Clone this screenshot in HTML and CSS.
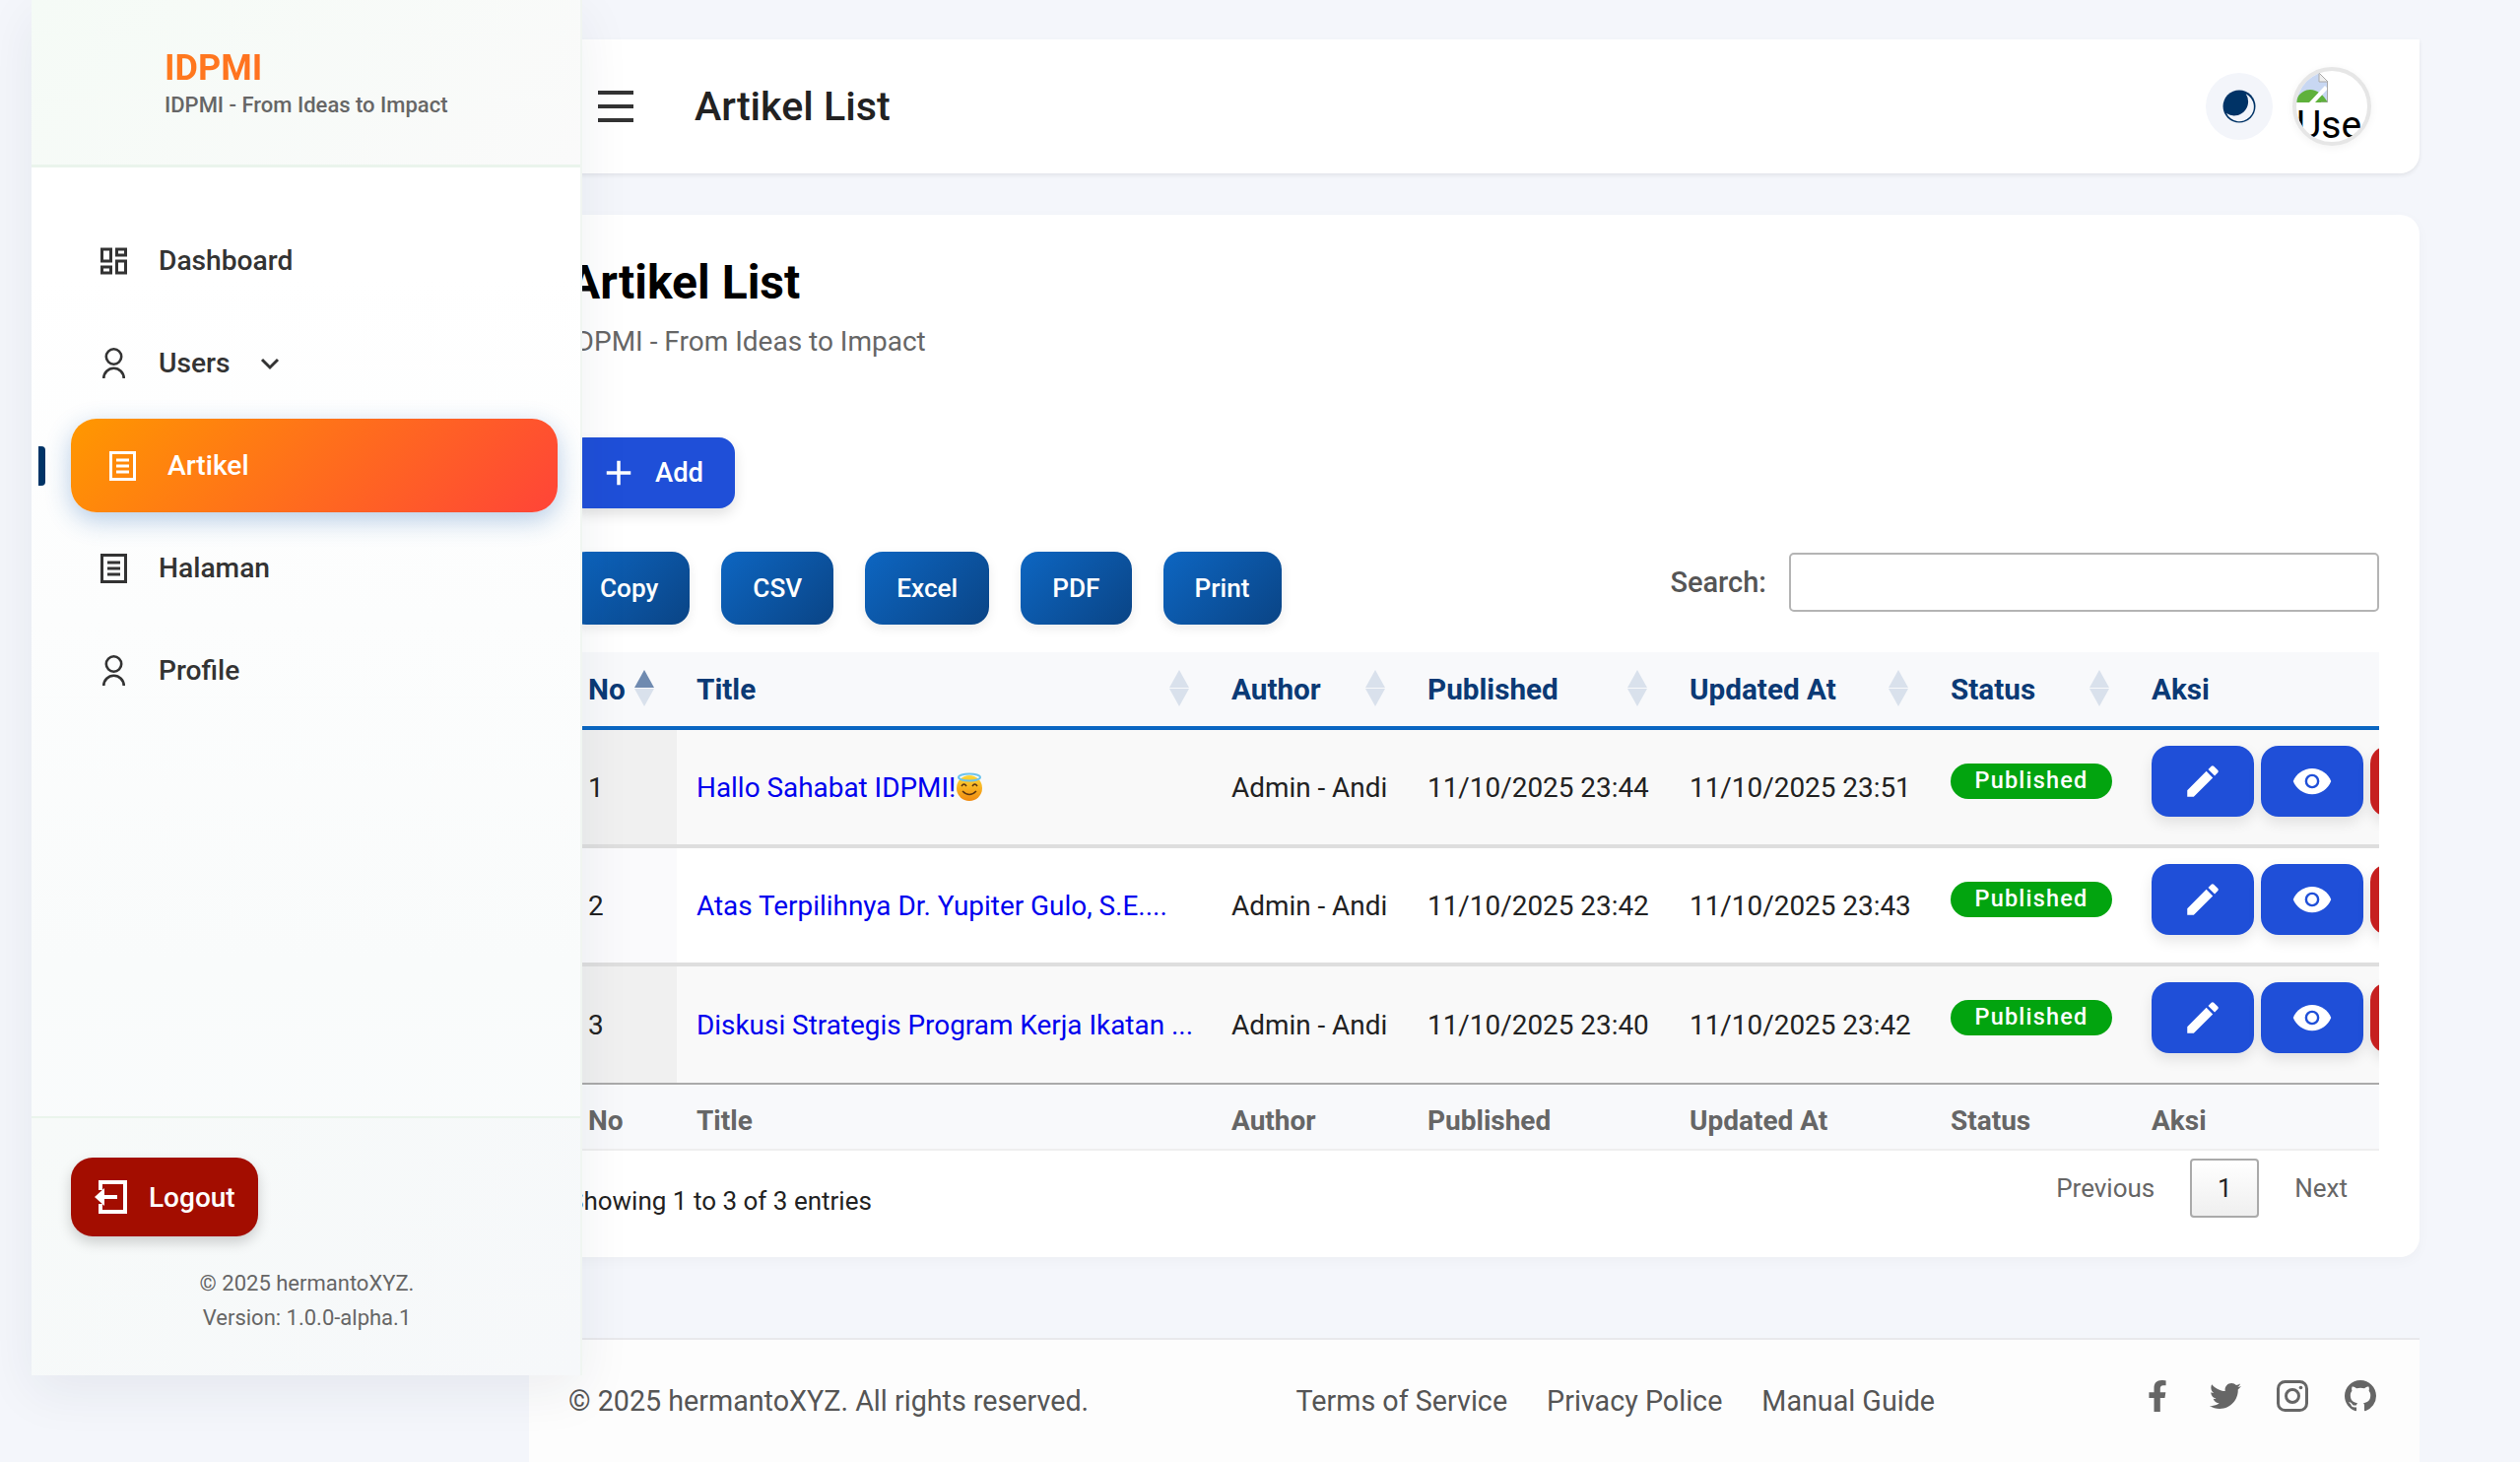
FILE: index.html
```html
<!DOCTYPE html>
<html lang="en">
<head>
	<meta charset="UTF-8">
	<title>Artikel List</title>
	<meta name="viewport" content="width=device-width, initial-scale=1.0">
	<link rel="stylesheet" href="styles.css">
</head>
<body>
	<aside class="sidebar">
		<div class="brand">
			<div class="brand-name">IDPMI</div>
			<div class="brand-tag">IDPMI - From Ideas to Impact</div>
		</div>
		<nav class="nav">
			<a class="nav-item">
				<svg class="nav-icon" viewBox="3 3 18 18"><path d="M19 5v2h-4V5h4M9 5v6H5V5h4m10 8v6h-4v-6h4M9 17v2H5v-2h4M21 3h-8v6h8V3zM11 3H3v10h8V3zm10 8h-8v10h8V11zm-10 4H3v6h8v-6z"/></svg>
				Dashboard
			</a>
			<a class="nav-item">
				<svg class="nav-icon person" viewBox="0 0 27 32"><circle cx="13.500" cy="9" r="7.700"/><path d="M3.300 31A10.200 10.200 0 0 1 23.700 31"/></svg>
				Users
				<svg class="chevron" viewBox="0 0 20 14"><path d="M2 3l8 8 8-8"/></svg>
			</a>
			<span class="nav-marker"></span>
			<a class="nav-item active">
				<svg class="nav-icon doc" viewBox="0 0 27 30"><rect x="1.500" y="1.500" width="24" height="27"/><path d="M7 9h13M7 15h13M7 21h13"/></svg>
				Artikel
			</a>
			<a class="nav-item">
				<svg class="nav-icon doc" viewBox="0 0 27 30"><rect x="1.500" y="1.500" width="24" height="27"/><path d="M7 9h13M7 15h13M7 21h13"/></svg>
				Halaman
			</a>
			<a class="nav-item">
				<svg class="nav-icon person" viewBox="0 0 27 32"><circle cx="13.500" cy="9" r="7.700"/><path d="M3.300 31A10.200 10.200 0 0 1 23.700 31"/></svg>
				Profile
			</a>
		</nav>
		<div class="side-foot">
			<button class="logout">
				<svg viewBox="0 0 33 34"><path class="frame" d="M6 10V2h25v30H6v-8"/><path class="arrow" d="M8 17h15"/><path class="head" d="M0 17l10-9v18z"/></svg>
				Logout
			</button>
			<p class="side-copy">© 2025 hermantoXYZ.</p>
			<p class="side-copy">Version: 1.0.0-alpha.1</p>
		</div>
	</aside>

	<div class="main">
		<header class="topbar">
			<button class="burger"><span></span><span></span><span></span></button>
			<div class="topbar-title">Artikel List</div>
			<button class="theme-btn">
				<svg viewBox="0 0 34 34"><circle cx="17" cy="17" r="16.500" fill="#003366"/><path fill="#f3f5fa" d="M23.700 4.300A14.700 14.700 0 1 1 4 24A14.200 14.200 0 0 0 23.700 4.300z"/></svg>
			</button>
			<div class="avatar">
				<svg class="broken" viewBox="0 0 32 30">
					<path fill="#c8d7f2" d="M0 0h23l9 9v21H0z"/>
					<path fill="#5fb13c" d="M0 30v-4c4-6 9-9 14-9 7 0 13 5 18 13z"/>
					<path fill="#fff" d="M0 6c5 0 9-2 12-6H0zM13 30l16-17 3 3-13 14z"/>
					<path fill="#eee" stroke="#aaa" d="M23 0l9 9h-9z"/>
					<path fill="none" stroke="#aaa" d="M31.500 9v21H25"/>
				</svg>
				<span class="avatar-alt">User</span>
			</div>
		</header>

		<section class="card">
			<h1 class="card-title">Artikel List</h1>
			<p class="card-sub">IDPMI - From Ideas to Impact</p>
			<button class="add-btn">
				<svg viewBox="0 0 24 24"><path d="M19 13h-6v6h-2v-6H5v-2h6V5h2v6h6v2z"/></svg>
				Add
			</button>

			<div class="toolbar">
				<div class="export">
					<button class="export-btn">Copy</button>
					<button class="export-btn">CSV</button>
					<button class="export-btn">Excel</button>
					<button class="export-btn">PDF</button>
					<button class="export-btn">Print</button>
				</div>
				<label class="search">Search: <input type="text"></label>
			</div>

			<div class="table-wrap">
				<table class="data-table">
					<colgroup>
						<col class="col-no"><col class="col-title"><col class="col-author"><col class="col-pub"><col class="col-upd"><col class="col-status"><col class="col-aksi">
					</colgroup>
					<thead>
						<tr>
							<th>No<span class="sort sorted"></span></th>
							<th>Title<span class="sort"></span></th>
							<th>Author<span class="sort"></span></th>
							<th>Published<span class="sort"></span></th>
							<th>Updated At<span class="sort"></span></th>
							<th>Status<span class="sort"></span></th>
							<th>Aksi</th>
						</tr>
					</thead>
					<tbody>
						<tr class="odd">
							<td class="first">1</td>
							<td><a class="link">Hallo Sahabat IDPMI!<svg class="emoji" viewBox="0 0 28 30"><defs><linearGradient id="face" x1="0" y1="0" x2="0" y2="1"><stop offset="0" stop-color="#fdd835"/><stop offset="1" stop-color="#f08a10"/></linearGradient></defs><circle cx="14" cy="16" r="13" fill="url(#face)"/><ellipse cx="14" cy="5" rx="11" ry="3.500" fill="none" stroke="#6cc3ec" stroke-width="2"/><path d="M6 14q2.500-4 5 0M17 14q2.500-4 5 0M7 19q7 7 14 0" fill="none" stroke="#5a3510" stroke-width="1.500"/></svg></a></td>
							<td>Admin - Andi</td>
							<td>11/10/2025 23:44</td>
							<td>11/10/2025 23:51</td>
							<td class="cell-status"><span class="badge">Published</span></td>
							<td class="cell-aksi">
								<div class="actions">
									<button class="act"><svg viewBox="0 0 24 24"><path d="M3 17.250V21h3.750L17.810 9.940l-3.750-3.750L3 17.250zM20.710 7.040c.39-.39.39-1.020 0-1.410l-2.340-2.340c-.39-.39-1.020-.39-1.410 0l-1.830 1.830 3.750 3.750 1.830-1.830z"/></svg></button>
									<button class="act"><svg viewBox="0 0 24 24"><path d="M12 4.500C7 4.500 2.730 7.610 1 12c1.730 4.390 6 7.500 11 7.500s9.270-3.110 11-7.500c-1.730-4.390-6-7.500-11-7.500z"/><circle class="pupil" cx="12" cy="12" r="3.500"/></svg></button>
									<button class="act danger"></button>
								</div>
							</td>
						</tr>
						<tr class="even">
							<td class="first">2</td>
							<td><a class="link">Atas Terpilihnya Dr. Yupiter Gulo, S.E....</a></td>
							<td>Admin - Andi</td>
							<td>11/10/2025 23:42</td>
							<td>11/10/2025 23:43</td>
							<td class="cell-status"><span class="badge">Published</span></td>
							<td class="cell-aksi">
								<div class="actions">
									<button class="act"><svg viewBox="0 0 24 24"><path d="M3 17.250V21h3.750L17.810 9.940l-3.750-3.750L3 17.250zM20.710 7.040c.39-.39.39-1.020 0-1.410l-2.340-2.340c-.39-.39-1.020-.39-1.410 0l-1.830 1.830 3.750 3.750 1.830-1.830z"/></svg></button>
									<button class="act"><svg viewBox="0 0 24 24"><path d="M12 4.500C7 4.500 2.730 7.610 1 12c1.730 4.390 6 7.500 11 7.500s9.270-3.110 11-7.500c-1.730-4.390-6-7.500-11-7.500z"/><circle class="pupil" cx="12" cy="12" r="3.500"/></svg></button>
									<button class="act danger"></button>
								</div>
							</td>
						</tr>
						<tr class="odd last">
							<td class="first">3</td>
							<td><a class="link">Diskusi Strategis Program Kerja Ikatan ...</a></td>
							<td>Admin - Andi</td>
							<td>11/10/2025 23:40</td>
							<td>11/10/2025 23:42</td>
							<td class="cell-status"><span class="badge">Published</span></td>
							<td class="cell-aksi">
								<div class="actions">
									<button class="act"><svg viewBox="0 0 24 24"><path d="M3 17.250V21h3.750L17.810 9.940l-3.750-3.750L3 17.250zM20.710 7.040c.39-.39.39-1.020 0-1.410l-2.340-2.340c-.39-.39-1.020-.39-1.410 0l-1.830 1.830 3.750 3.750 1.830-1.830z"/></svg></button>
									<button class="act"><svg viewBox="0 0 24 24"><path d="M12 4.500C7 4.500 2.730 7.610 1 12c1.730 4.390 6 7.500 11 7.500s9.270-3.110 11-7.500c-1.730-4.390-6-7.500-11-7.500z"/><circle class="pupil" cx="12" cy="12" r="3.500"/></svg></button>
									<button class="act danger"></button>
								</div>
							</td>
						</tr>
					</tbody>
					<tfoot>
						<tr>
							<th>No</th>
							<th>Title</th>
							<th>Author</th>
							<th>Published</th>
							<th>Updated At</th>
							<th>Status</th>
							<th>Aksi</th>
						</tr>
					</tfoot>
				</table>
			</div>

			<div class="table-foot">
				<div class="info">Showing 1 to 3 of 3 entries</div>
				<div class="paging">
					<a class="page-link">Previous</a>
					<a class="page-num">1</a>
					<a class="page-link">Next</a>
				</div>
			</div>
		</section>

		<footer class="footer">
			<div class="foot-copy">© 2025 hermantoXYZ. All rights reserved.</div>
			<div class="foot-links">
				<a>Terms of Service</a>
				<a>Privacy Police</a>
				<a>Manual Guide</a>
			</div>
			<div class="socials">
				<svg viewBox="0 0 320 512"><path d="M279.140 288l14.220-92.660h-88.910v-60.130c0-25.350 12.420-50.060 52.240-50.060h40.420V6.260S260.430 0 225.360 0c-73.220 0-121.080 44.380-121.080 124.720v70.620H22.890V288h81.390v224h100.170V288z"/></svg>
				<svg viewBox="0 0 512 512"><path d="M459.370 151.716c.325 4.548.325 9.097.325 13.645 0 138.720-105.583 298.558-298.558 298.558-59.452 0-114.680-17.219-161.137-47.106 8.447.974 16.568 1.299 25.340 1.299 49.055 0 94.213-16.568 130.274-44.832-46.132-.975-84.792-31.188-98.112-72.772 6.498.974 12.995 1.624 19.818 1.624 9.421 0 18.843-1.300 27.614-3.573-48.081-9.747-84.143-51.980-84.143-102.985v-1.299c13.969 7.797 30.214 12.670 47.431 13.319-28.264-18.843-46.781-51.005-46.781-87.391 0-19.492 5.197-37.360 14.294-52.954 51.655 63.675 129.300 105.258 216.365 109.807-1.624-7.797-2.599-15.918-2.599-24.040 0-57.828 46.782-104.934 104.934-104.934 30.213 0 57.502 12.670 76.670 33.137 23.715-4.548 46.456-13.320 66.599-25.340-7.798 24.366-24.366 44.833-46.132 57.827 21.117-2.273 41.584-8.122 60.426-16.243-14.292 20.791-32.161 39.308-52.628 54.253z"/></svg>
				<svg viewBox="0 0 32 32"><rect class="ig" x="1.500" y="1.500" width="29" height="29" rx="7"/><circle class="ig" cx="16" cy="16" r="6.500"/><circle cx="24.500" cy="7.500" r="1.800"/></svg>
				<svg viewBox="0 0 16 16"><path d="M8 0C3.580 0 0 3.580 0 8c0 3.540 2.290 6.530 5.470 7.590.4.070.55-.17.55-.38 0-.19-.01-.82-.01-1.490-2.010.37-2.530-.49-2.690-.94-.09-.23-.48-.94-.82-1.130-.28-.15-.68-.52-.01-.53.63-.01 1.080.58 1.230.82.72 1.210 1.870.87 2.330.66.070-.52.28-.87.51-1.070-1.780-.2-3.640-.89-3.640-3.950 0-.87.31-1.590.82-2.150-.08-.2-.36-1.020.08-2.120 0 0 .67-.21 2.200.82.64-.18 1.320-.27 2-.27.68 0 1.360.09 2 .27 1.530-1.040 2.200-.82 2.200-.82.44 1.100.16 1.920.08 2.120.51.56.82 1.270.82 2.150 0 3.070-1.870 3.750-3.650 3.950.29.25.54.73.54 1.480 0 1.070-.01 1.930-.01 2.200 0 .21.15.46.55.38A8.013 8.013 0 0016 8c0-4.420-3.580-8-8-8z"/></svg>
			</div>
		</footer>
	</div>
</body>
</html>
```

FILE: styles.css
```css
* {
	box-sizing: border-box;
}

html,
body {
	height: 100%;
}

body {
	margin: 0;
	position: relative;
	overflow: hidden;
	background-color: #f4f6fb;
	font-family: Roboto, "Liberation Sans", sans-serif;
	font-size: 26px;
	color: #212529;
}

button {
	font-family: inherit;
	border: none;
	cursor: pointer;
}

/* sidebar lies over the content */
.sidebar {
	position: absolute;
	left: 32px;
	top: 0;
	z-index: 5;
	width: 559px;
	height: 1396px;
	display: flex;
	flex-direction: column;
	background: linear-gradient(180deg, #fff 20%, #f9fbfb 70%, #fafbfd 100%);
	border-right: 2px solid #f0f5f1;
	box-shadow: 0 16px 50px rgba(30, 40, 70, 0.07);
}

.brand {
	height: 170px;
	padding: 48px 0 0 135px;
	background: linear-gradient(135deg, #f5fbf6, #fafafa);
	border-bottom: 3px solid #eaf4ec;
}

.brand-name {
	font-size: 36px;
	line-height: 42px;
	font-weight: 700;
	background: linear-gradient(90deg, #ff7a1e, #ff5525);
	-webkit-background-clip: text;
	background-clip: text;
	color: transparent;
}

.brand-tag {
	margin-top: 2px;
	font-size: 22px;
	line-height: 30px;
	font-weight: 500;
	color: #666;
}

.nav {
	position: relative;
	flex: 1;
	display: flex;
	flex-direction: column;
	gap: 9px;
	padding: 47px 23px 0 40px;
}

.nav-item {
	height: 95px;
	display: flex;
	align-items: center;
	padding-left: 30px;
	font-size: 28.200px;
	font-weight: 500;
	color: #333;
}

.nav-item.active {
	padding-left: 39px;
	border-radius: 26px;
	color: #fff;
	background: linear-gradient(135deg, #ff9800, #ff4438);
	box-shadow: 0 8px 26px rgba(30, 100, 180, 0.32);
}

.nav-marker {
	position: absolute;
	left: 7px;
	top: 283px;
	width: 7px;
	height: 40px;
	border-radius: 0 4px 4px 0;
	background-color: #003366;
}

.nav-icon {
	width: 27px;
	height: 30px;
	margin-right: 32px;
	fill: #333;
	flex: none;
}

.nav-icon.person {
	height: 32px;
	fill: none;
	stroke: #333;
	stroke-width: 2.600px;
}

.nav-icon.doc {
	fill: none;
	stroke: #333;
	stroke-width: 3px;
}

.active .nav-icon.doc {
	stroke: #fff;
}

.chevron {
	width: 20px;
	height: 14px;
	margin-left: 30px;
	fill: none;
	stroke: #333;
	stroke-width: 3px;
}

.side-foot {
	height: 263px;
	padding: 40px 23px 0 40px;
	background: linear-gradient(135deg, #f7faf9, #f6f8fa);
	border-top: 2px solid #eaf4ec;
}

.logout {
	height: 80px;
	width: 190px;
	display: flex;
	align-items: center;
	gap: 22px;
	padding: 0 0 0 24px;
	margin-bottom: 30px;
	border-radius: 22px;
	background-color: #a30d00;
	color: #fff;
	font-size: 28px;
	font-weight: 500;
	box-shadow: 0 6px 14px rgba(0, 0, 0, 0.18);
}

.logout svg {
	width: 33px;
	height: 34px;
}

.logout .frame,
.logout .arrow {
	fill: none;
	stroke: #fff;
	stroke-width: 4px;
}

.logout .head {
	fill: #fff;
}

.side-copy {
	margin: 0 0 0 -40px;
	width: 559px;
	text-align: center;
	font-size: 22px;
	line-height: 35px;
	color: #666;
}

/* main column */
.main {
	margin-left: 537px;
	width: 1919px;
	padding-top: 40px;
}

.topbar {
	height: 136px;
	display: flex;
	align-items: center;
	padding: 0 49px 0 70px;
	background-color: #fff;
	border-radius: 0 0 20px 0;
	box-shadow: 0 2px 4px rgba(0, 0, 0, 0.08);
}

.burger {
	width: 36px;
	height: 32px;
	padding: 0;
	display: flex;
	flex-direction: column;
	justify-content: space-between;
	background: none;
}

.burger span {
	height: 4px;
	background-color: #333;
}

.topbar-title {
	margin-left: 62px;
	flex: 1;
	font-size: 41.200px;
	font-weight: 500;
	color: #222;
}

.theme-btn {
	width: 68px;
	height: 68px;
	display: flex;
	align-items: center;
	justify-content: center;
	padding: 0;
	border-radius: 50%;
	background-color: #f3f5fa;
}

.theme-btn svg {
	width: 34px;
	height: 34px;
}

.avatar {
	width: 80px;
	height: 80px;
	margin-left: 20px;
	overflow: hidden;
	border: 4px solid #e6e6e6;
	border-radius: 50%;
	background-color: #fff;
	box-shadow: 0 2px 8px rgba(0, 0, 0, 0.05);
}

.broken {
	display: block;
	width: 32px;
	height: 30px;
	margin-top: 2px;
}

.avatar-alt {
	display: block;
	width: 66px;
	overflow: hidden;
	font-size: 39px;
	line-height: 46px;
	color: #000;
	white-space: nowrap;
}

.card {
	margin-top: 42px;
	height: 1058px;
	padding: 40px 41px 0 40px;
	background-color: #fff;
	border-radius: 20px;
	box-shadow: 0 4px 14px rgba(0, 0, 0, 0.03);
}

.card-title {
	margin: 0;
	font-size: 48px;
	line-height: 58px;
	font-weight: 700;
	color: #000;
}

.card-sub {
	margin: 14px 0 0;
	font-size: 28px;
	line-height: 34px;
	color: #666;
}

.add-btn {
	height: 72px;
	margin-top: 80px;
	display: flex;
	align-items: center;
	gap: 16px;
	padding: 0 32px 0 30px;
	border-radius: 16px;
	background-color: #1f4fd8;
	color: #fff;
	font-size: 27.400px;
	font-weight: 500;
	box-shadow: 0 6px 14px rgba(0, 0, 0, 0.12);
}

.add-btn svg {
	width: 42px;
	height: 42px;
	fill: #fff;
}

.toolbar {
	height: 74px;
	margin-top: 44px;
	display: flex;
	justify-content: space-between;
}

.export {
	display: flex;
	gap: 32px;
}

.export-btn {
	height: 74px;
	padding: 0 32px;
	border-radius: 18px;
	background: linear-gradient(135deg, #0d66c2, #0a4485);
	color: #fff;
	font-size: 26.200px;
	font-weight: 500;
	box-shadow: 0 4px 12px rgba(0, 0, 0, 0.08);
}

.search {
	height: 60px;
	display: flex;
	align-items: center;
	gap: 23px;
	margin-top: 1px;
	color: #555;
	font-size: 29px;
	font-weight: 500;
}

.search input {
	width: 599px;
	height: 60px;
	border: 2px solid #b4b4b4;
	border-radius: 5px;
	background-color: #fff;
}

/* table, wider than its box on purpose: the third action button is cut off */
.table-wrap {
	margin-top: 28px;
	width: 1838px;
	overflow: hidden;
}

.data-table {
	width: 1953px;
	table-layout: fixed;
	border-collapse: separate;
	border-spacing: 0;
}

.col-no { width: 110px; }
.col-title { width: 543px; }
.col-author { width: 199px; }
.col-pub { width: 266px; }
.col-upd { width: 265px; }
.col-status { width: 204px; }
.col-aksi { width: 366px; }

.data-table thead th {
	position: relative;
	height: 79px;
	padding: 0 20px;
	text-align: left;
	font-size: 29.700px;
	font-weight: 700;
	color: #0b3a75;
	background-color: #f8f9fb;
	border-bottom: 4px solid #0a66c2;
}

.data-table tfoot th {
	height: 67px;
	padding: 7px 20px 0;
	text-align: left;
	font-size: 28px;
	font-weight: 700;
	color: #666;
	background-color: #f8f9fb;
	border-bottom: 2px solid #eee;
}

.data-table td {
	height: 120px;
	padding: 0 20px;
	white-space: nowrap;
	overflow: hidden;
	border-bottom: 4px solid #dedede;
	color: #222;
	font-size: 27.900px;
}

.data-table .last td {
	border-bottom: 2px solid #aaa;
}

.odd td {
	background-color: #f9f9f9;
}

.odd td.first {
	background-color: #f0f0f0;
}

.even td {
	background-color: #fff;
}

.even td.first {
	background-color: #fafafc;
}

/* sort arrows sit over the header cell */
.sort {
	position: absolute;
	right: 22px;
	top: 18px;
	width: 21px;
	height: 37px;
}

.sort::before,
.sort::after {
	content: "";
	position: absolute;
	left: 0;
	border-left: 10.500px solid transparent;
	border-right: 10.500px solid transparent;
}

.sort::before {
	top: 0;
	border-bottom: 18px solid #d9e1ec;
}

.sort::after {
	bottom: 0;
	border-top: 18px solid #d9e1ec;
}

.sort.sorted::before {
	border-bottom-color: #6f8ab0;
}

.link {
	color: #0000ee;
}

.emoji {
	width: 28px;
	height: 30px;
	vertical-align: -5px;
}

.data-table .cell-status,
.data-table .cell-aksi {
	vertical-align: top;
}

.data-table .cell-status {
	padding-top: 34px;
}

.data-table .cell-aksi {
	padding-top: 16px;
	overflow: visible;
}

.badge {
	display: block;
	width: 164px;
	height: 36px;
	border-radius: 18px;
	background-color: #02a40f;
	color: #fff;
	text-align: center;
	font-size: 23.500px;
	line-height: 35px;
	font-weight: 500;
	letter-spacing: 1.200px;
}

.actions {
	display: flex;
	gap: 7px;
}

.act {
	width: 104px;
	height: 72px;
	flex: none;
	padding: 0;
	display: flex;
	align-items: center;
	justify-content: center;
	border-radius: 18px;
	background-color: #1f4fd8;
	box-shadow: 0 6px 14px rgba(0, 0, 0, 0.1);
}

.act.danger {
	background-color: #c62020;
}

.act svg {
	width: 42px;
	height: 42px;
	fill: #fff;
}

.act .pupil {
	fill: #fff;
	stroke: #1f4fd8;
	stroke-width: 1.400px;
}

.table-foot {
	margin-top: 8px;
	display: flex;
	justify-content: space-between;
	padding-right: 32px;
}

.info {
	padding-top: 26px;
	line-height: 34px;
	color: #222;
}

.paging {
	height: 60px;
	display: flex;
	align-items: center;
	gap: 36px;
	color: #666;
}

.page-num {
	width: 70px;
	height: 60px;
	display: flex;
	align-items: center;
	justify-content: center;
	border: 2px solid #aaa;
	border-radius: 4px;
	background: linear-gradient(180deg, #fff, #efefef);
	color: #222;
}

.footer {
	margin-top: 82px;
	height: 126px;
	display: flex;
	align-items: center;
	justify-content: space-between;
	padding: 0 44px 0 40px;
	border-top: 2px solid #e9e9ec;
	background-color: #fdfdfd;
	font-size: 28.700px;
	color: #555;
}

.foot-links {
	display: flex;
	gap: 40px;
}

.socials {
	display: flex;
	align-items: center;
	gap: 36.500px;
	margin-top: -10px;
}

.socials svg {
	width: 32px;
	height: 32px;
	fill: #666;
}

.socials .ig {
	fill: none;
	stroke: #666;
	stroke-width: 3px;
}
```
